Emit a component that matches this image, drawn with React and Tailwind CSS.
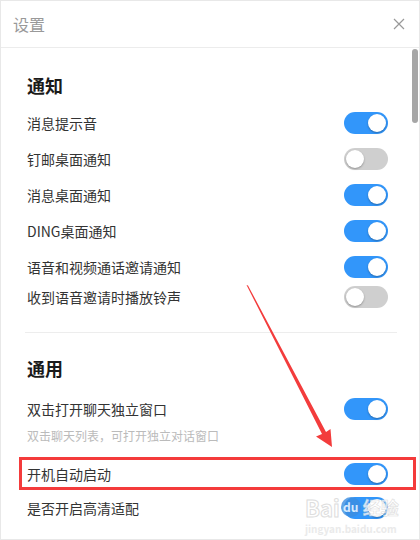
import React from "react";

function Toggle({ on }) {
  return (
    <div
      className={
        "relative w-[44px] h-[22px] rounded-full shrink-0 " +
        (on ? "bg-[#3296fa]" : "bg-[#cfcfcf]")
      }
    >
      <div
        className={
          "absolute top-[2px] w-[18px] h-[18px] rounded-full bg-white shadow-[0_1px_2px_rgba(0,0,0,0.3)] " +
          (on ? "right-[2px]" : "left-[2px]")
        }
      />
    </div>
  );
}

function Row({ label, on, h = "h-[36px]" }) {
  return (
    <div className={"flex items-center justify-between " + h}>
      <span className="text-[14px] text-[#333]">{label}</span>
      <Toggle on={on} />
    </div>
  );
}

export default function App() {
  return (
    <div
      className="relative w-[420px] h-[540px] bg-white border border-[#e8e8e8] overflow-hidden"
      style={{ fontFamily: '"Noto Sans CJK SC", "Noto Sans", sans-serif' }}
    >
      {/* Header */}
      <div className="h-[47px] border-b border-[#ececec] flex items-center justify-between pl-[12px] pr-[14px]">
        <span className="text-[16px] text-[#999]">设置</span>
        <svg width="12" height="12" viewBox="0 0 12 12" className="text-[#999]">
          <path d="M1 1 L11 11 M11 1 L1 11" stroke="currentColor" strokeWidth="1.2" />
        </svg>
      </div>

      {/* Content */}
      <div className="flex flex-col pl-[26px] pr-[31px]">
        <div className="mt-[25px] h-[24px] flex items-center text-[18px] font-bold text-[#1a1a1a]">
          通知
        </div>
        <div className="mt-[8px] flex flex-col">
          <Row label="消息提示音" on />
          <Row label="钉邮桌面通知" on={false} />
          <Row label="消息桌面通知" on />
          <Row label="DING桌面通知" on />
          <Row label="语音和视频通话邀请通知" on />
          <Row label="收到语音邀请时播放铃声" on={false} h="h-[24px]" />
        </div>
        <div className="mt-[23px] h-px bg-[#ededed] -ml-[2px] -mr-[9px]" />
        <div className="mt-[23px] h-[24px] flex items-center text-[18px] font-bold text-[#1a1a1a]">
          通用
        </div>
        <div className="mt-[11px]">
          <Row label="双击打开聊天独立窗口" on />
        </div>
        <div className="h-[18px] flex items-center text-[12px] text-[#bbbbbb]">
          双击聊天列表，可打开独立对话窗口
        </div>
        <div className="mt-[12px] -ml-[8px] -mr-[28px] h-[33px] border-[3px] border-[#f43b3b] flex items-center justify-between pl-[5px] pr-[25px]">
          <span className="text-[14px] text-[#333] mt-[1px]">开机自动启动</span>
          <Toggle on />
        </div>
        <Row label="是否开启高清适配" on />
      </div>

      {/* Scrollbar */}
      <div className="absolute right-[1px] top-[48px] w-[6px] h-[74px] rounded-full bg-[#a6a6a6]" />

      {/* Red arrow annotation */}
      <svg
        className="absolute left-0 top-0 pointer-events-none"
        width="420"
        height="540"
        viewBox="0 0 420 540"
      >
        <polygon
          points="245.5,284 247,284.5 325,431 329.5,428 331,446 315,435.5 321,433"
          fill="#f33c3c"
        />
      </svg>

      {/* Watermark */}
      <div className="absolute left-[304px] top-[494px] pointer-events-none opacity-80 flex flex-col">
        <div className="flex items-center h-[24px]">
          <span
            className="text-[22px] leading-[24px] font-bold text-white"
            style={{ WebkitTextStroke: "1px #d6d6d6" }}
          >
            Bai
          </span>
          <span className="ml-[1px] w-[20px] h-[20px] rounded-full bg-[#3d8ee0] text-white text-[12px] leading-[20px] font-bold flex items-center justify-center">
            du
          </span>
          <span
            className="ml-[2px] text-[18px] leading-[20px] font-bold text-white"
            style={{ WebkitTextStroke: "0.6px #d6d6d6" }}
          >
            经验
          </span>
        </div>
        <div className="mt-[4px] h-[12px] text-[10px] leading-[12px] text-[#e6e6e6] font-bold">
          jingyan.baidu.com
        </div>
      </div>
    </div>
  );
}
